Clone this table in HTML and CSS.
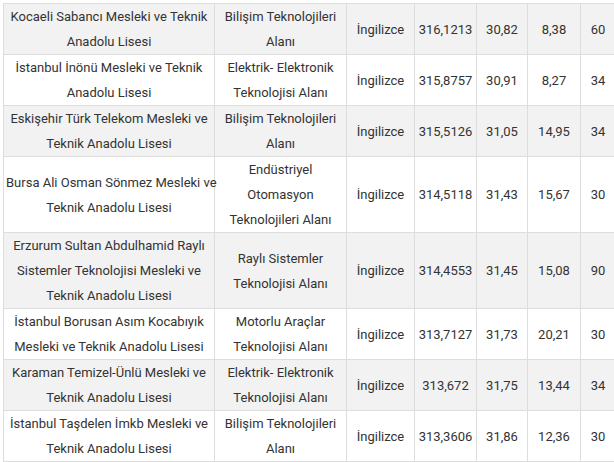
FILE: index.html
```html
<!DOCTYPE html>
<html lang="tr">
<head>
<meta charset="utf-8">
<title>Okullar</title>
<link rel="stylesheet" href="styles.css">
</head>
<body>
<div class="wrap">
<table class="schools">
<colgroup>
<col class="c-school"><col class="c-field"><col class="c-lang"><col class="c-score"><col class="c-pct"><col class="c-pct2"><col class="c-quota">
</colgroup>
<tbody>
<tr><td>Kocaeli Sabancı Mesleki ve Teknik<br>Anadolu Lisesi</td><td>Bilişim Teknolojileri<br>Alanı</td><td>İngilizce</td><td>316,1213</td><td>30,82</td><td>8,38</td><td>60</td></tr>
<tr><td>İstanbul İnönü Mesleki ve Teknik<br>Anadolu Lisesi</td><td>Elektrik- Elektronik<br>Teknolojisi Alanı</td><td>İngilizce</td><td>315,8757</td><td>30,91</td><td>8,27</td><td>34</td></tr>
<tr><td>Eskişehir Türk Telekom Mesleki ve<br>Teknik Anadolu Lisesi</td><td>Bilişim Teknolojileri<br>Alanı</td><td>İngilizce</td><td>315,5126</td><td>31,05</td><td>14,95</td><td>34</td></tr>
<tr><td>Bursa Ali Osman Sönmez Mesleki ve<br>Teknik Anadolu Lisesi</td><td>Endüstriyel<br>Otomasyon<br>Teknolojileri Alanı</td><td>İngilizce</td><td>314,5118</td><td>31,43</td><td>15,67</td><td>30</td></tr>
<tr><td>Erzurum Sultan Abdulhamid Raylı<br>Sistemler Teknolojisi Mesleki ve<br>Teknik Anadolu Lisesi</td><td>Raylı Sistemler<br>Teknolojisi Alanı</td><td>İngilizce</td><td>314,4553</td><td>31,45</td><td>15,08</td><td>90</td></tr>
<tr><td>İstanbul Borusan Asım Kocabıyık<br>Mesleki ve Teknik Anadolu Lisesi</td><td>Motorlu Araçlar<br>Teknolojisi Alanı</td><td>İngilizce</td><td>313,7127</td><td>31,73</td><td>20,21</td><td>30</td></tr>
<tr><td>Karaman Temizel-Ünlü Mesleki ve<br>Teknik Anadolu Lisesi</td><td>Elektrik- Elektronik<br>Teknolojisi Alanı</td><td>İngilizce</td><td>313,672</td><td>31,75</td><td>13,44</td><td>34</td></tr>
<tr><td>İstanbul Taşdelen İmkb Mesleki ve<br>Teknik Anadolu Lisesi</td><td>Bilişim Teknolojileri<br>Alanı</td><td>İngilizce</td><td>313,3606</td><td>31,86</td><td>12,36</td><td>30</td></tr>
</tbody>
</table>
</div>
</body>
</html>
```

FILE: styles.css
```css
html, body {
  margin: 0;
  padding: 0;
  overflow: hidden;
  background: #ffffff;
}
.wrap {
  padding: 3px 0 0 3px;
}
.schools {
  border-collapse: collapse;
  table-layout: fixed;
  width: 612px;
  font-family: Roboto, "Liberation Sans", sans-serif;
  font-size: 13px;
  line-height: 25px;
  color: #333333;
}
.c-school { width: 211px; }
.c-field { width: 132px; }
.c-lang { width: 68px; }
.c-score { width: 62px; }
.c-pct { width: 51px; }
.c-pct2 { width: 53px; }
.c-quota { width: 35px; }
.schools td {
  border: 1px solid #dddddd;
  padding: 0 2px;
  text-align: center;
  vertical-align: middle;
  white-space: nowrap;
}
.schools tr:nth-child(odd) td {
  background: #f2f2f2;
}
.schools tr:nth-child(even) td {
  background: #ffffff;
}
```
